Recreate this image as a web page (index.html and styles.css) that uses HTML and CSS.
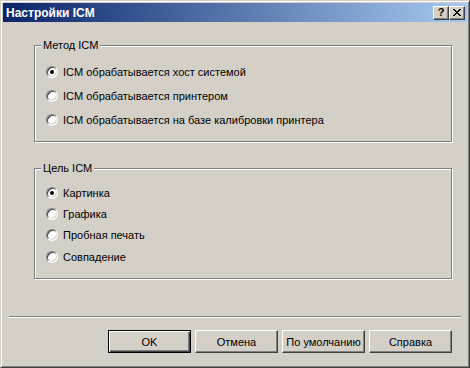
FILE: index.html
```html
<!DOCTYPE html>
<html lang="ru">
<head>
    <meta charset="UTF-8">
    <title>Настройки ICM</title>
    <link rel="stylesheet" href="styles.css">
</head>
<body>
    <div class="window">
        <div class="titlebar">
            <span class="title">Настройки ICM</span>
            <div class="caption-buttons">
                <span class="cap-btn cap-help">?</span>
                <span class="cap-btn">
                    <svg width="8" height="7" viewBox="0 0 8 7">
                        <path d="M0 0h2v1h1v1h2v-1h1v-1h2v1h-1v1h-1v1h-1v1h1v1h1v1h1v1h-2v-1h-1v-1h-2v1h-1v1h-2v-1h1v-1h1v-1h1v-1h-1v-1h-1v-1h-1z" fill="#000"/>
                    </svg>
                </span>
            </div>
        </div>

        <div class="client">
            <!-- Метод -->
            <fieldset class="group group-method">
                <legend>Метод ICM</legend>
                <label class="radio-row"><span class="radio checked"></span>ICM обрабатывается хост системой</label>
                <label class="radio-row"><span class="radio"></span>ICM обрабатывается принтером</label>
                <label class="radio-row"><span class="radio"></span>ICM обрабатывается на базе калибровки принтера</label>
            </fieldset>

            <!-- Цель -->
            <fieldset class="group group-target">
                <legend>Цель ICM</legend>
                <label class="radio-row"><span class="radio checked"></span>Картинка</label>
                <label class="radio-row"><span class="radio"></span>Графика</label>
                <label class="radio-row"><span class="radio"></span>Пробная печать</label>
                <label class="radio-row"><span class="radio"></span>Совпадение</label>
            </fieldset>

            <div class="separator"></div>

            <div class="buttons">
                <button class="btn btn-default">OK</button>
                <button class="btn">Отмена</button>
                <button class="btn">По умолчанию</button>
                <button class="btn">Справка</button>
            </div>
        </div>
    </div>
</body>
</html>
```

FILE: styles.css
```css
* {
    margin: 0;
    padding: 0;
    box-sizing: border-box;
}

body {
    width: 470px;
    height: 368px;
    background: #d4d0c8;
    font-family: 'Liberation Sans', Arial, sans-serif;
    font-size: 11px;
    color: #000;
}

.window {
    width: 470px;
    height: 368px;
    background: #d4d0c8;
    border: 1px solid;
    border-color: #d4d0c8 #404040 #404040 #d4d0c8;
    box-shadow: inset 1px 1px 0 #fff, inset -1px -1px 0 #808080;
    padding: 2px;
    display: flex;
    flex-direction: column;
}

/* заголовок окна */
.titlebar {
    height: 19px;
    background: linear-gradient(to right, #0a246a, #a6caf0);
    display: flex;
    align-items: center;
    justify-content: space-between;
    padding: 0 2px 0 2px;
}

.title {
    color: #fff;
    font-weight: bold;
    font-size: 12px;
    padding-left: 1px;
}

.caption-buttons {
    display: flex;
}

.cap-btn {
    width: 16px;
    height: 14px;
    background: #d4d0c8;
    border: 1px solid;
    border-color: #fff #404040 #404040 #fff;
    box-shadow: inset -1px -1px 0 #808080;
    display: flex;
    align-items: center;
    justify-content: center;
    font-weight: bold;
    font-size: 11px;
    line-height: 1;
}

/* клиентская область */
.client {
    flex: 1;
    display: flex;
    flex-direction: column;
    padding: 17px 15px 0 31px;
}

.group {
    min-width: 0;
    border: 1px solid #808080;
    box-shadow: inset 1px 1px 0 #fff, 1px 1px 0 #fff;
    padding: 0 11px 0 11px;
}

.group legend {
    margin-left: -5px;
    padding: 0 2px;
    line-height: 13px;
    background: #d4d0c8;
}

.group-method {
    height: 103px;
    padding-top: 8px;
}

.group-method .radio-row {
    height: 24px;
}

.group-target {
    margin-top: 20px;
    height: 117px;
    padding-top: 7px;
}

.group-target .radio-row {
    height: 21.4px;
}

.radio-row {
    display: flex;
    align-items: center;
    gap: 5px;
}

.radio {
    width: 12px;
    height: 12px;
    border-radius: 50%;
    border: 1px solid;
    border-color: #808080 #fff #fff #808080;
    box-shadow: inset 1px 1px 0 #404040, inset -1px -1px 0 #d4d0c8;
    background: #fff;
    display: flex;
    align-items: center;
    justify-content: center;
}

.radio.checked::after {
    content: '';
    width: 4px;
    height: 4px;
    border-radius: 50%;
    background: #000;
}

.separator {
    margin: 37px -9px 0 -25px;
    height: 2px;
    border-top: 1px solid #808080;
    border-bottom: 1px solid #fff;
}

.buttons {
    display: flex;
    justify-content: flex-end;
    gap: 4px;
    margin-top: 12px;
}

.btn {
    width: 83px;
    height: 23px;
    font-family: 'Liberation Sans', Arial, sans-serif;
    font-size: 11px;
    color: #000;
    background: #d4d0c8;
    border: 1px solid;
    border-color: #fff #404040 #404040 #fff;
    box-shadow: inset -1px -1px 0 #808080;
}

.btn-default {
    border: 1px solid #000;
    box-shadow: inset 1px 1px 0 #fff, inset -1px -1px 0 #404040, inset -2px -2px 0 #808080;
}
```
